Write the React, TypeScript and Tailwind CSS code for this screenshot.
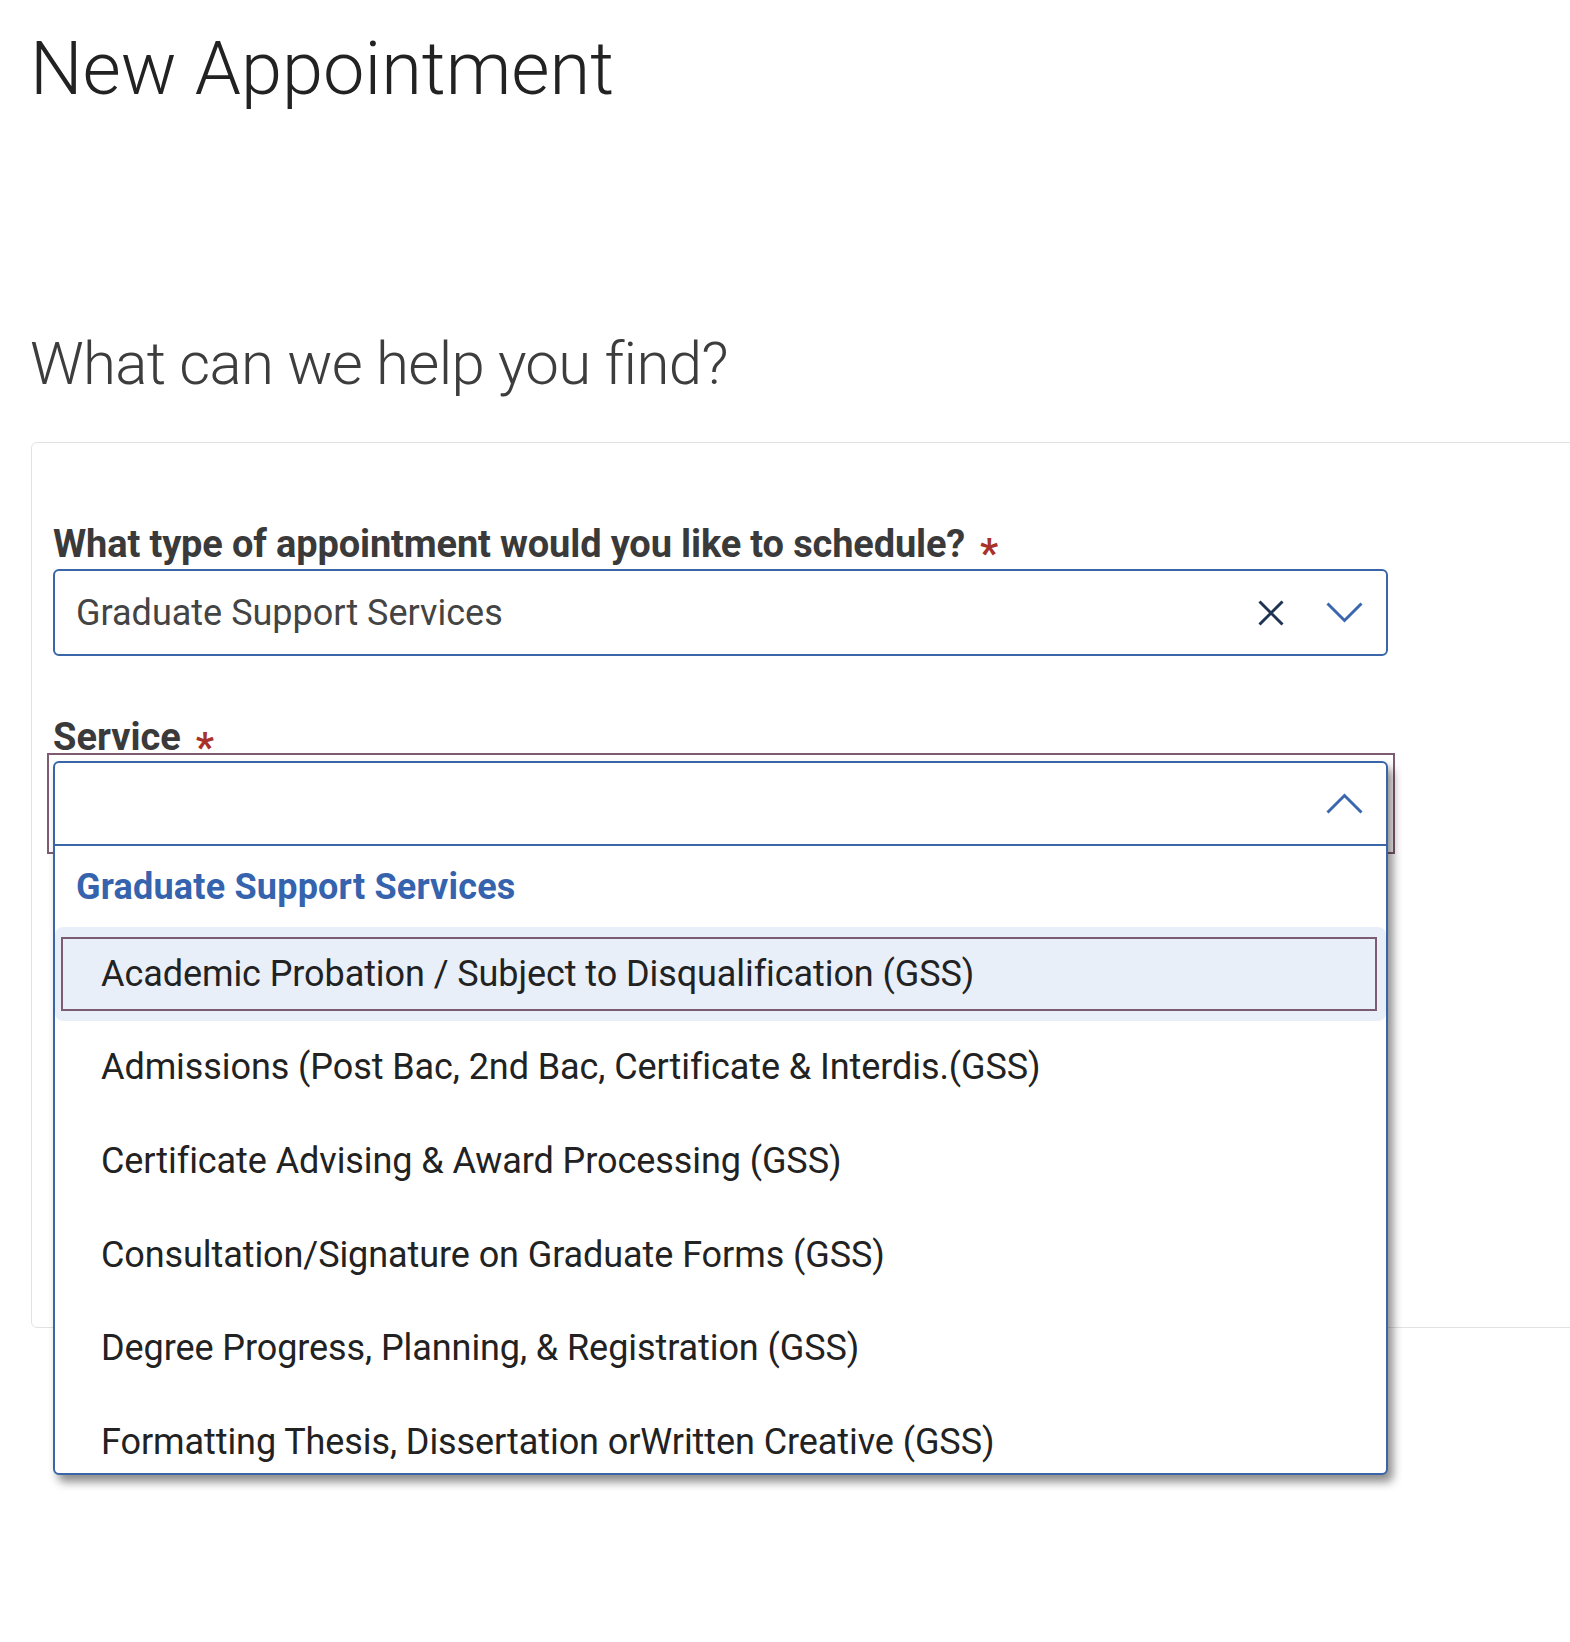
import React from "react";

const options = [
  "Academic Probation / Subject to Disqualification (GSS)",
  "Admissions (Post Bac, 2nd Bac, Certificate & Interdis.(GSS)",
  "Certificate Advising & Award Processing (GSS)",
  "Consultation/Signature on Graduate Forms (GSS)",
  "Degree Progress, Planning, & Registration (GSS)",
  "Formatting Thesis, Dissertation orWritten Creative (GSS)",
];

function XIcon() {
  return (
    <svg width="26" height="26" viewBox="0 0 26 26" fill="none">
      <path d="M1.5 1.5 L24.5 24.5 M24.5 1.5 L1.5 24.5" stroke="#1f3354" strokeWidth="3" />
    </svg>
  );
}

function Chevron({ up = false }: { up?: boolean }) {
  return (
    <svg width="37" height="21" viewBox="0 0 37 21" fill="none">
      {up ? (
        <path d="M1.5 19.5 L18.5 2.5 L35.5 19.5" stroke="#3a67b0" strokeWidth="3" />
      ) : (
        <path d="M1.5 1.5 L18.5 18.5 L35.5 1.5" stroke="#3a67b0" strokeWidth="3" />
      )}
    </svg>
  );
}

function Asterisk() {
  return (
    <span className="relative top-[10px] ml-[15px] text-[40px] font-bold text-[#a8322a]">*</span>
  );
}

export default function App() {
  return (
    <div className="min-h-[1642px] w-full overflow-hidden bg-white font-['Roboto',sans-serif]">
      <div className="pl-[30px] pt-[32px]">
        <h1 className="text-[74px] font-light leading-[74px] text-[#222]">New Appointment</h1>
        <h2 className="mt-[228px] text-[60px] font-light leading-[60px] tracking-[-0.7px] text-[#3d3d3d]">
          What can we help you find?
        </h2>
      </div>

      <div className="ml-[31px] mt-[48px] h-[886px] w-[1580px] rounded-[6px] border border-[#e2e2e2] pl-[21px] pt-[82px]">
        <div className="w-[1335px]">
          <label className="flex items-start text-[38px] font-bold leading-[38px] tracking-[-0.15px] text-[#3a3a3a]">
            What type of appointment would you like to schedule?
            <Asterisk />
          </label>
          <div className="mt-[6px] flex h-[87px] items-center rounded-[6px] border-2 border-[#3a65a8] pl-[21px] pr-[23px]">
            <span className="text-[36px] text-[#444]">Graduate Support Services</span>
            <div className="ml-auto flex items-center gap-[42px]">
              <XIcon />
              <Chevron />
            </div>
          </div>

          <label className="mt-[64px] flex items-start text-[38px] font-bold leading-[35px] text-[#3a3a3a]">
            Service
            <Asterisk />
          </label>
          <div className="relative mt-[6px] h-[85px]">
            <div className="absolute -bottom-[8px] -left-[6px] -right-[7px] -top-[8px] border-2 border-[#7d5c72]" />
            <div className="absolute left-0 right-0 top-0 z-10 flex h-[714px] flex-col overflow-hidden rounded-[6px] border-2 border-[#3a65a8] bg-white shadow-[5px_7px_10px_rgba(0,0,0,0.45)]">
              <div className="flex h-[83px] shrink-0 items-center justify-end border-b-2 border-[#3a65a8] pr-[23px]">
                <Chevron up />
              </div>
              <div className="flex h-[81px] shrink-0 items-center pl-[21px] text-[36px] font-bold tracking-[0.2px] text-[#3563ad]">
                Graduate Support Services
              </div>
              {options.map((o, i) => (
                <div
                  key={o}
                  className={
                    i === 0
                      ? "relative flex h-[93.6px] shrink-0 items-center rounded-[8px] bg-[#e9eff9] pl-[46px] text-[36px] tracking-[-0.08px] text-[#222]"
                      : "relative flex h-[93.6px] shrink-0 items-center pl-[46px] text-[36px] tracking-[-0.08px] text-[#222]"
                  }
                >
                  {i === 0 && (
                    <div className="absolute bottom-[10px] left-[6px] right-[9px] top-[10px] border-2 border-[#7d5c72]" />
                  )}
                  <span className="relative">{o}</span>
                </div>
              ))}
            </div>
          </div>
        </div>
      </div>
    </div>
  );
}
